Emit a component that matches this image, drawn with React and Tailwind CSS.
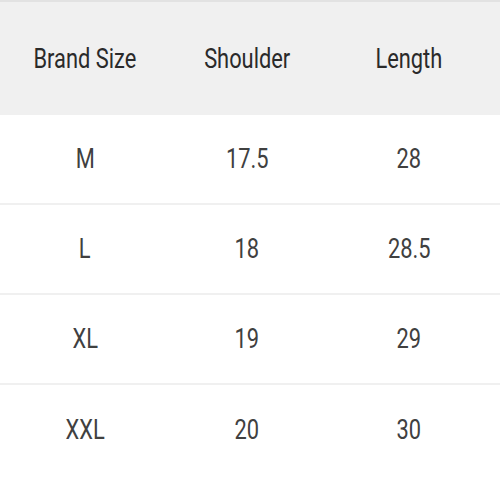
import React from 'react';

const rows = [
  ['M', '17.5', '28'],
  ['L', '18', '28.5'],
  ['XL', '19', '29'],
  ['XXL', '20', '30'],
];

const Cell = ({ children, className = '' }) => (
  <div className="flex items-center justify-center">
    <span className={`inline-block origin-center scale-x-[0.78] text-[28px] leading-none ${className}`}>
      {children}
    </span>
  </div>
);

export default function App() {
  return (
    <div
      className="w-[500px] h-[500px] bg-white flex flex-col overflow-hidden"
      style={{ fontFamily: 'Roboto, "Noto Sans", sans-serif' }}
    >
      {/* Header */}
      <div className="h-[115px] shrink-0 border-t-2 border-[#e2e2e2] bg-[#f0f0f0] grid grid-cols-[162px_162px_162px] pl-[4px]">
        <Cell className="text-[#2a2a2a]">Brand Size</Cell>
        <Cell className="text-[#2a2a2a]">Shoulder</Cell>
        <Cell className="text-[#2a2a2a]">Length</Cell>
      </div>

      {/* Body */}
      {rows.map((r, i) => (
        <div
          key={r[0]}
          className={`h-[90px] shrink-0 grid grid-cols-[162px_162px_162px] pl-[4px] ${
            i < rows.length - 1 ? 'border-b-2 border-[#f0f0f0]' : ''
          }`}
        >
          {r.map((v, j) => (
            <Cell key={j} className="text-[#404040]">{v}</Cell>
          ))}
        </div>
      ))}
    </div>
  );
}
